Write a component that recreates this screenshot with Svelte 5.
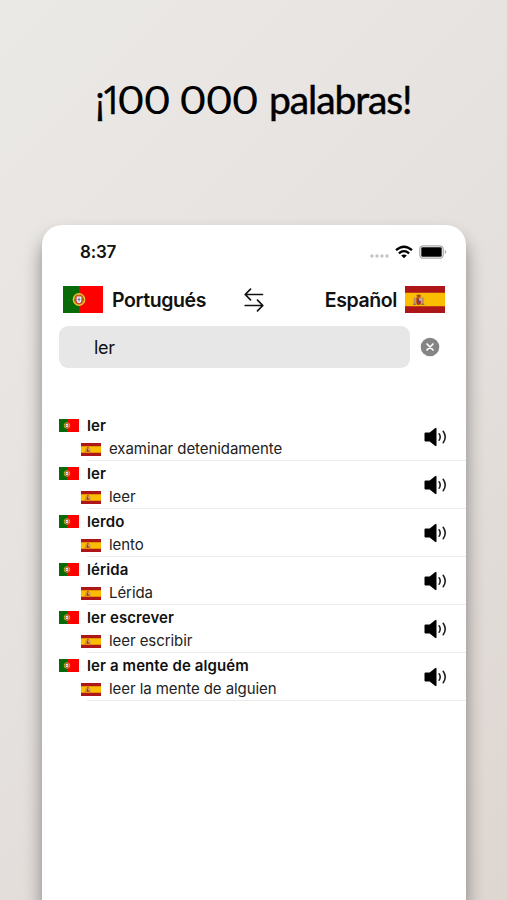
<script lang="ts">
  type Entry = {
    word: string;
    translation: string;
  };

  const entries: Entry[] = [
    { word: "ler", translation: "examinar detenidamente" },
    { word: "ler", translation: "leer" },
    { word: "lerdo", translation: "lento" },
    { word: "lérida", translation: "Lérida" },
    { word: "ler escrever", translation: "leer escribir" },
    { word: "ler a mente de alguém", translation: "leer la mente de alguien" },
  ];

  let query = $state("ler");
</script>

{#snippet portugal()}
  <svg class="flag" viewBox="0 0 60 40" preserveAspectRatio="none">
    <rect width="60" height="40" fill="#fe0000" />
    <rect width="24" height="40" fill="#086b08" />
    <circle cx="24" cy="20" r="8.500" fill="#7d7a16" stroke="#e8c52a" stroke-width="2" />
    <path d="M16 17l16 7M17 25l14-9M24 11v18" stroke="#e8c52a" stroke-width="1" />
    <path d="M19 14h10v8q0 5-5 5t-5-5z" fill="#e9302a" />
    <path d="M20.500 15.500h7v6.500q0 3.500-3.500 3.500t-3.500-3.500z" fill="#f3f3f8" />
    <path d="M24 17v6M22 20h4" stroke="#4560a8" stroke-width="1.300" />
  </svg>
{/snippet}

{#snippet spain()}
  <svg class="flag" viewBox="0 0 60 40" preserveAspectRatio="none">
    <rect width="60" height="40" fill="#ad1519" />
    <rect y="10" width="60" height="20" fill="#fabd00" />
    <path d="M13 17h3v10h-3zM25 17h3v10h-3z" fill="#b98a72" />
    <path d="M17 17h7v7q0 4-3.500 4T17 24z" fill="#ad3328" />
    <path d="M17 13.500q3.500-2 7 0l-1 3h-5z" fill="#a84a20" />
    <path d="M21 18h3v4h-3z" fill="#cdb4b4" />
    <circle cx="20.500" cy="22" r="1.300" fill="#344b91" />
    <path d="M12 27h5M24 27h5" stroke="#705c7d" stroke-width="1.500" />
  </svg>
{/snippet}

<main>
  <h1><span class="lead">¡1</span><span class="zeros">00</span> <span class="zeros thousand">000</span> <span class="noun">palabras!</span></h1>

  <div class="phone">
    <div class="status">
      <span class="time">8:37</span>
      <div class="signals">
        <svg width="19" height="4" viewBox="0 0 19 4" fill="#c4c4c4">
          <circle cx="2" cy="2" r="1.700" />
          <circle cx="7" cy="2" r="1.700" />
          <circle cx="12" cy="2" r="1.700" />
          <circle cx="17" cy="2" r="1.700" />
        </svg>
        <svg class="wifi" width="18" height="14" viewBox="0 0 18 14" fill="none" stroke="#000" stroke-width="2.300">
          <path d="M1 5.200q8-7 16 0M3.900 8.300q5.100-4.300 10.200 0" />
          <path d="M9 13.300L6.200 10.500q2.800-2.200 5.600 0z" fill="#000" stroke="none" />
        </svg>
        <svg class="battery" width="28" height="14" viewBox="0 0 28 14">
          <rect x=".8" y=".8" width="23.400" height="12.400" rx="3.500" fill="#fff" stroke="#aaa" stroke-width="1.300" />
          <rect x="2.300" y="2.300" width="20.400" height="9.400" rx="1.300" />
          <path d="M25.800 4.800q3 2.200 0 4.400z" fill="#aaa" />
        </svg>
      </div>
    </div>

    <div class="languages">
      {@render portugal()}
      <span class="source">Portugués</span>
      <button class="swap" aria-label="Cambiar idiomas">
        <svg width="20" height="24" viewBox="0 0 20 24" fill="none" stroke="#111" stroke-width="1.700" stroke-linecap="round" stroke-linejoin="round">
          <path d="M18.500 6.500H1.200M6.500 1.200L1.200 6.500l5.300 5.300M1.200 17.500h17.600M13.500 12.200l5.300 5.300-5.300 5.300" />
        </svg>
      </button>
      <span class="target">Español</span>
      {@render spain()}
    </div>

    <div class="search">
      <input type="text" bind:value={query} />
      <button aria-label="Borrar" onclick={() => (query = "")}>
        <svg width="20" height="20" viewBox="0 0 20 20">
          <circle cx="10" cy="10" r="9.300" fill="#858585" />
          <path d="M7 7l6 6M13 7l-6 6" stroke="#fff" stroke-width="1.700" stroke-linecap="round" />
        </svg>
      </button>
    </div>

    <ul>
      {#each entries as entry}
        <li>
          <div class="entry">
            <div class="word">{@render portugal()}<span>{entry.word}</span></div>
            <div class="translation">{@render spain()}<span>{entry.translation}</span></div>
          </div>
          <button aria-label="Escuchar">
            <svg width="24" height="20" viewBox="0 0 24 20">
              <path d="M1.500 5.500h4.200L11 1.200q1.500-.9 1.500.5v16.600q0 1.400-1.500.5L5.700 14.500H1.500q-1 0-1-1v-7q0-1 1-1z" />
              <path d="M15.200 6.800q2 3.200 0 6.400M19.200 4.300q4 5.700 0 11.400" fill="none" stroke="#222" stroke-width="1.600" stroke-linecap="round" />
            </svg>
          </button>
        </li>
      {/each}
    </ul>
  </div>
</main>

<style>
  :global(body) {
    margin: 0;
    overflow: hidden;
  }

  main {
    height: 900px;
    overflow: hidden;
    display: flex;
    flex-direction: column;
    align-items: center;
    background: linear-gradient(135deg, #ebe9e6 0%, #e5e1de 50%, #ded6d1 100%);
    font-family: Inter, "Liberation Sans", sans-serif;
    color: #111;
  }

  h1 {
    width: 317px;
    height: 225px;
    box-sizing: border-box;
    margin: 0;
    padding-top: 74px;
    display: flex;
    align-items: baseline;
    font: 400 39px/50px Lato, sans-serif;
    color: #000;
    white-space: nowrap;
    -webkit-text-stroke: 0.5px #000;
  }

  .lead {
    width: 23px;
    font-family: "Open Sans", sans-serif;
    font-size: 38px;
    letter-spacing: -4px;
  }

  .zeros {
    width: 62px;
    letter-spacing: 0.3px;
    transform: scaleX(1.14);
    transform-origin: left;
    -webkit-text-stroke: 0;
  }

  .thousand {
    width: 89px;
  }

  .noun {
    letter-spacing: -1.1px;
  }

  .phone {
    width: 424px;
    height: 675px;
    margin-left: 1px;
    border-radius: 20px 20px 0 0;
    background: #fff;
    box-shadow: 0 12px 18px rgba(0, 0, 0, 0.42);
  }

  button {
    border: 0;
    padding: 0;
    background: none;
    display: flex;
    cursor: pointer;
  }

  svg {
    display: block;
    flex: none;
  }

  .status {
    height: 54px;
    padding: 0 19px 0 38px;
    display: flex;
    align-items: center;
    justify-content: space-between;
  }

  .time {
    font-size: 17px;
    font-weight: 600;
    letter-spacing: -0.2px;
  }

  .signals {
    display: flex;
    align-items: center;
  }

  .signals svg:first-child {
    margin-top: 8px;
  }

  .wifi {
    margin: 0 6px 0 6px;
  }

  .languages {
    height: 41px;
    padding: 0 21px;
    display: flex;
    align-items: center;
    font-size: 19.5px;
    font-weight: 600;
    letter-spacing: -0.4px;
  }

  .languages .flag {
    width: 40px;
    height: 27px;
  }

  .source {
    width: 132px;
    margin-left: 9px;
  }

  .target {
    margin: 0 8px 0 auto;
  }

  .search {
    margin: 6px 0 0 17px;
    display: flex;
    align-items: center;
    gap: 10px;
  }

  input {
    width: 351px;
    height: 42px;
    box-sizing: border-box;
    padding: 0 35px;
    border: 0;
    border-radius: 9px;
    background: #e7e7e7;
    font: 400 18px Inter, sans-serif;
    letter-spacing: -0.3px;
    color: #111;
    outline: none;
  }

  ul {
    list-style: none;
    margin: 45px 0 0;
    padding: 0;
  }

  li {
    height: 48px;
    padding: 0 18px 0 17px;
    display: flex;
    align-items: center;
    justify-content: space-between;
    background: linear-gradient(#ececec, #ececec) right bottom / 379px 1px no-repeat;
  }

  .word,
  .translation {
    height: 24px;
    display: flex;
    align-items: center;
    gap: 8px;
    font-size: 15px;
    line-height: 24px;
    white-space: nowrap;
  }

  .word {
    font-weight: 600;
    letter-spacing: 0.1px;
  }

  .translation {
    padding-left: 22px;
    letter-spacing: -0.07px;
    color: #222;
  }

  .word span {
    padding-top: 1px;
  }

  .entry .flag {
    width: 20px;
    height: 13px;
  }
</style>
